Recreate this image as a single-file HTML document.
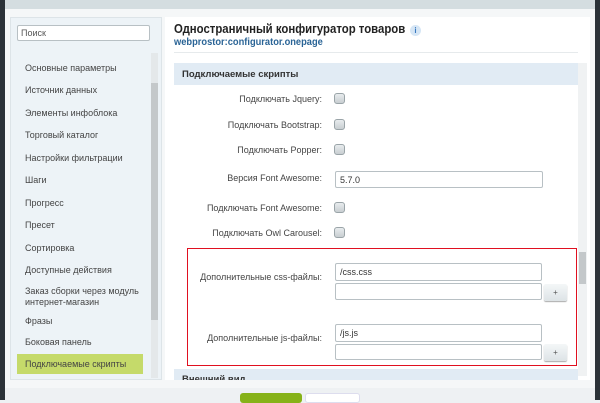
<!DOCTYPE html>
<html><head><meta charset="utf-8"><style>
*{box-sizing:border-box;margin:0;padding:0}
body{width:600px;height:400px;overflow:hidden;background:#eef1f3;font-family:"Liberation Sans",sans-serif;font-size:9px;color:#333;position:relative}
.a{position:absolute}
.inp{position:absolute;background:#fff;border:1px solid #b8c0c4;border-radius:2px;font-size:9px;padding:3px 4px;color:#333}
.cb{position:absolute;width:11px;height:11px;border:1px solid #9aa4a8;border-radius:3px;background:linear-gradient(#e8ecee,#c8ced1)}
.lb{position:absolute;right:278px;text-align:right;font-size:9px;color:#444;white-space:nowrap}
.li{position:absolute;left:25px;font-size:9px;color:#444}
.pl{position:absolute;width:23px;height:17px;border-radius:2px;background:linear-gradient(#f4f7f8,#dde3e6);box-shadow:0 1px 1px #aaa;font-size:8px;text-align:center;line-height:17px;color:#555}
</style></head><body>
<div class="a" style="left:0;top:0;width:600px;height:9px;background:#d4dde0"></div>
<div class="a" style="left:0;top:0;width:5px;height:400px;background:#2b3238"></div>
<div class="a" style="left:595px;top:0;width:5px;height:400px;background:#2b3238"></div>
<div class="a" style="left:5px;top:9px;width:590px;height:379px;background:#f5f7f8"></div>
<div class="a" style="left:10px;top:17px;width:152px;height:363px;background:#edf3f7;border:1px solid #dde4e8"></div>
<div class="inp" style="left:17px;top:25px;width:133px;height:16px;padding:2px 3px;color:#555">Поиск</div>
<div class="a" style="left:151px;top:53px;width:7px;height:325px;background:#e4e8ea"></div>
<div class="a" style="left:151px;top:83px;width:7px;height:237px;background:#c4c8ca"></div>
<div class="li" style="top:63px">Основные параметры</div>
<div class="li" style="top:85px">Источник данных</div>
<div class="li" style="top:108px">Элементы инфоблока</div>
<div class="li" style="top:130px">Торговый каталог</div>
<div class="li" style="top:153px">Настройки фильтрации</div>
<div class="li" style="top:175px">Шаги</div>
<div class="li" style="top:198px">Прогресс</div>
<div class="li" style="top:220px">Пресет</div>
<div class="li" style="top:243px">Сортировка</div>
<div class="li" style="top:265px">Доступные действия</div>
<div class="li" style="top:286px;line-height:11px">Заказ сборки через модуль<br>интернет-магазин</div>
<div class="li" style="top:316px">Фразы</div>
<div class="li" style="top:337px">Боковая панель</div>
<div class="a" style="left:17px;top:354px;width:126px;height:20px;background:#c5da6a"></div>
<div class="li" style="top:359px">Подключаемые скрипты</div>
<div class="a" style="left:165px;top:17px;width:425px;height:363px;background:#fff"></div>
<div class="a" style="left:174px;top:21px;font-size:13px;font-weight:bold;color:#222;transform:scaleX(0.875);transform-origin:left;white-space:nowrap">Одностраничный конфигуратор товаров</div>
<div class="a" style="left:410px;top:25px;width:11px;height:11px;border-radius:50%;background:#d6e6f5;color:#3a7ac0;font-size:8px;font-weight:bold;text-align:center;line-height:11px">i</div>
<div class="a" style="left:174px;top:37px;font-size:10px;font-weight:bold;color:#2a6496;transform:scaleX(0.93);transform-origin:left;white-space:nowrap">webprostor:configurator.onepage</div>
<div class="a" style="left:174px;top:52px;width:404px;height:1px;background:#e6eaec"></div>
<div class="a" style="left:174px;top:63px;width:404px;height:22px;background:#e1ebf4"></div>
<div class="a" style="left:182px;top:69px;font-size:9.5px;font-weight:bold;color:#333">Подключаемые скрипты</div>
<div class="a" style="left:578px;top:63px;width:9px;height:313px;background:#f0f2f3"></div>
<div class="a" style="left:579px;top:252px;width:7px;height:32px;background:#c4c8ca"></div>
<div class="lb" style="top:94px">Подключать Jquery:</div><div class="cb" style="left:334px;top:93px"></div>
<div class="lb" style="top:120px">Подключать Bootstrap:</div><div class="cb" style="left:334px;top:119px"></div>
<div class="lb" style="top:145px">Подключать Popper:</div><div class="cb" style="left:334px;top:144px"></div>
<div class="lb" style="top:173px">Версия Font Awesome:</div>
<div class="inp" style="left:335px;top:171px;width:208px;height:17px">5.7.0</div>
<div class="lb" style="top:203px">Подключать Font Awesome:</div><div class="cb" style="left:334px;top:202px"></div>
<div class="lb" style="top:228px">Подключать Owl Carousel:</div><div class="cb" style="left:334px;top:227px"></div>
<div class="a" style="left:187px;top:248px;width:390px;height:118px;border:1.5px solid #e01020"></div>
<div class="lb" style="top:272px">Дополнительные css-файлы:</div>
<div class="inp" style="left:335px;top:263px;width:207px;height:18px">/css.css</div>
<div class="inp" style="left:335px;top:283px;width:207px;height:17px"></div>
<div class="pl" style="left:544px;top:284px">+</div>
<div class="lb" style="top:333px">Дополнительные js-файлы:</div>
<div class="inp" style="left:335px;top:324px;width:207px;height:18px">/js.js</div>
<div class="inp" style="left:335px;top:344px;width:207px;height:16px"></div>
<div class="pl" style="left:544px;top:344px">+</div>
<div class="a" style="left:174px;top:369px;width:404px;height:11px;background:#e1ebf4;overflow:hidden"><div style="padding:5px 0 0 8px;font-size:9.5px;font-weight:bold">Внешний вид</div></div>
<div class="a" style="left:240px;top:393px;width:62px;height:10px;border-radius:3px;background:#86b218"></div>
<div class="a" style="left:305px;top:393px;width:55px;height:10px;border-radius:3px;background:#fff;border:1px solid #dde"></div>
</body></html>
